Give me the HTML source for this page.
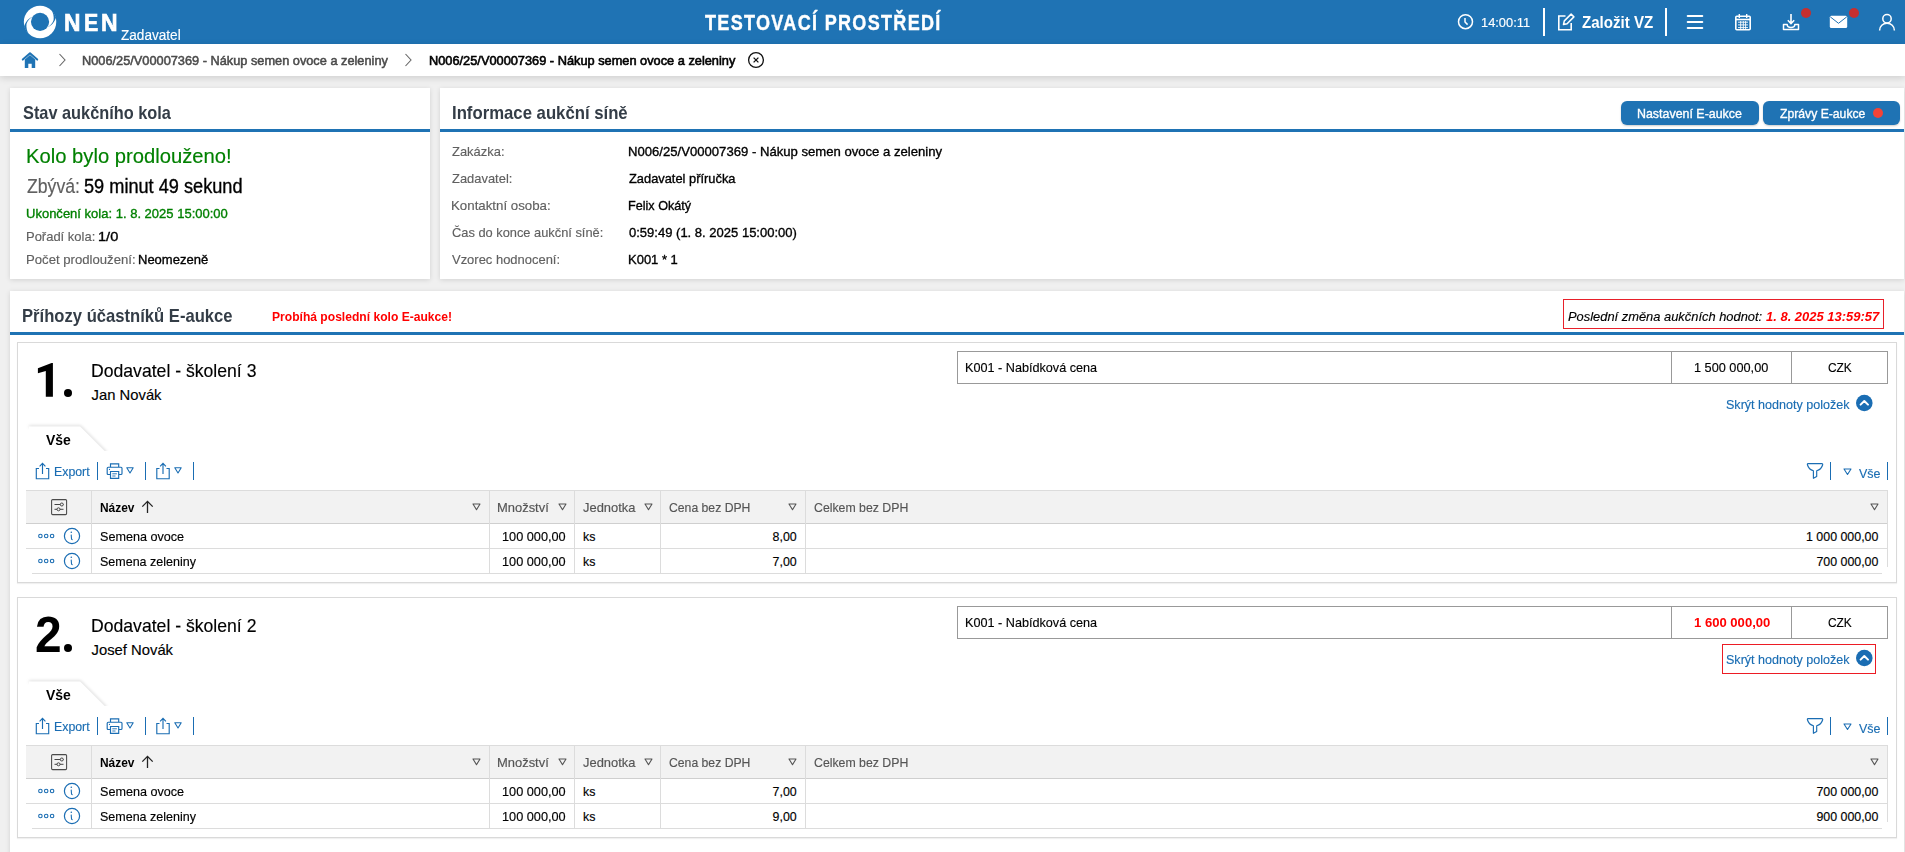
<!DOCTYPE html>
<html lang="cs">
<head>
<meta charset="utf-8">
<title>NEN - Aukční síň</title>
<style>
*{box-sizing:border-box;margin:0;padding:0}
html,body{width:1905px;height:852px;overflow:hidden}
body{background:#f0f0f0;font-family:"Liberation Sans",sans-serif;color:#000;position:relative}
.abs{position:absolute;white-space:nowrap}
.t{position:absolute;white-space:nowrap;line-height:0;transform-origin:0 0}
.panel{background:#fff;box-shadow:0 1px 5px rgba(0,0,0,0.13)}
.btn{background:#1f73b4;border-radius:6px;box-shadow:0 1px 2px rgba(0,0,0,0.2)}
.card{background:#fff;border:1px solid #d9d9d9;box-shadow:0 1px 1px rgba(0,0,0,0.06)}
</style>
</head>
<body>
<div class="abs" style="left:0;top:0;width:1905px;height:44px;background:#1f73b4"></div>
<svg class="abs" style="left:0;top:0" width="64" height="44" viewBox="0 0 64 44">
<circle cx="40.05" cy="21.95" r="16.2" fill="#fff"/><circle cx="40.05" cy="21.85" r="9.1" fill="#1f73b4"/>
<path id="gp1" d="M32.9 16.4C28.5 18.3 25.2 22 24.1 26.7A16.3 16.3 0 0 0 29 34.1C26.8 31.5 26.1 27.3 26.5 24C27.4 20.9 29.8 18.2 32.9 16.4Z" fill="#1f73b4"/>
<use href="#gp1" transform="rotate(180 40.05 21.95)"/>
</svg>
<svg class="abs" style="left:1457px;top:13px" width="18" height="18" viewBox="0 0 18 18"><circle cx="8.5" cy="8.7" r="7" stroke="#fff" stroke-width="1.5" fill="none"/><path d="M8 5v4l2.6 2.6" stroke="#fff" stroke-width="1.5" fill="none"/></svg>
<div class="abs" style="left:1543px;top:8px;width:2px;height:28px;background:#fff"></div>
<svg class="abs" style="left:1557px;top:13px" width="18" height="18" viewBox="0 0 18 18"><path d="M8.5 3H1.8v13.8h12.4V10" stroke="#fff" stroke-width="1.6" fill="none"/><path d="M6.5 11.5l.8-3.6 6.8-6.8 2.8 2.8-6.8 6.8z" stroke="#fff" stroke-width="1.5" fill="none" stroke-linejoin="round"/></svg>
<div class="abs" style="left:1665px;top:8px;width:2px;height:28px;background:#fff"></div>
<svg class="abs" style="left:1686px;top:14px" width="18" height="16" viewBox="0 0 18 16"><path d="M1.8 2h14.4M1.8 8h14.4M1.8 14h14.4" stroke="#fff" stroke-width="2.2" stroke-linecap="round"/></svg>
<svg class="abs" style="left:1734px;top:13px" width="18" height="18" viewBox="0 0 18 18"><rect x="1.8" y="3.2" width="14.4" height="13.6" rx="1" stroke="#fff" stroke-width="1.6" fill="none"/><path d="M1.8 6.5h14.4" stroke="#fff" stroke-width="1.6"/><path d="M5.3 1v4M12.7 1v4" stroke="#fff" stroke-width="1.4"/><path d="M4 9.2h10M4 11.9h10M4 14.6h10M6.7 8v8M9.3 8v8M11.6 8v8" stroke="#fff" stroke-width="0.9"/></svg>
<svg class="abs" style="left:1782px;top:13px" width="18" height="18" viewBox="0 0 18 18"><path d="M9 1v9.5M5.8 7.2L9 10.5l3.2-3.3" stroke="#fff" stroke-width="1.6" fill="none"/><path d="M1.5 11.5v5h15v-5h-3.7c0 2-1.5 3-3.8 3s-3.8-1-3.8-3z" stroke="#fff" stroke-width="1.5" fill="none" stroke-linejoin="round"/></svg>
<div class="abs" style="left:1801px;top:8px;width:10px;height:10px;border-radius:50%;background:#c62f2f"></div>
<svg class="abs" style="left:1829px;top:15px" width="19" height="14" viewBox="0 0 19 14"><rect x="0.8" y="0.8" width="17.4" height="12.2" rx="1.5" fill="#fff"/><path d="M1.2 1.8l8.3 6.5 8.3-6.5" stroke="#1f73b4" stroke-width="1" fill="none"/></svg>
<div class="abs" style="left:1849px;top:8px;width:10px;height:10px;border-radius:50%;background:#c62f2f"></div>
<svg class="abs" style="left:1878px;top:13px" width="18" height="18" viewBox="0 0 18 18"><circle cx="9" cy="5.8" r="4.2" stroke="#fff" stroke-width="1.5" fill="none"/><path d="M1.6 17.5c0-4.5 3.3-7.2 7.4-7.2s7.4 2.7 7.4 7.2" stroke="#fff" stroke-width="1.5" fill="none"/></svg>
<div class="abs" style="left:0;top:44px;width:1905px;height:32px;background:#fff;box-shadow:0 2px 7px rgba(0,0,0,0.14)"></div>
<svg class="abs" style="left:21px;top:51px" width="18" height="18" viewBox="0 0 18 18"><path d="M1.8 8.6L9 2.2l7.2 6.4" stroke="#1f73b4" stroke-width="2" fill="none" stroke-linecap="round" stroke-linejoin="round"/><path d="M3.8 8.4L9 3.9l5.2 4.5V17H10.7v-4.3H7.3V17H3.8z" fill="#1f73b4"/></svg>
<svg class="abs" style="left:57px;top:53px" width="12" height="14" viewBox="0 0 12 14"><path d="M2.5 1l5.5 6-5.5 6" stroke="#666" stroke-width="1.1" fill="none"/></svg>
<svg class="abs" style="left:403px;top:53px" width="12" height="14" viewBox="0 0 12 14"><path d="M2.5 1l5.5 6-5.5 6" stroke="#666" stroke-width="1.1" fill="none"/></svg>
<svg class="abs" style="left:747px;top:51px" width="18" height="18" viewBox="0 0 18 18"><circle cx="9" cy="9" r="7.4" stroke="#111" stroke-width="1.3" fill="none"/><path d="M6.6 6.6l4.8 4.8M11.4 6.6l-4.8 4.8" stroke="#111" stroke-width="1.3"/></svg>
<div class="abs panel" style="left:10px;top:88px;width:420px;height:191px"></div>
<div class="abs" style="left:10px;top:129px;width:420px;height:3px;background:#1f73b4"></div>
<div class="abs panel" style="left:440px;top:88px;width:1464px;height:191px"></div>
<div class="abs" style="left:440px;top:129px;width:1464px;height:3px;background:#1f73b4"></div>
<div class="abs btn" style="left:1621px;top:101px;width:138px;height:24px"></div>
<div class="abs btn" style="left:1763px;top:101px;width:137px;height:24px"></div>
<div class="abs" style="left:1873px;top:108px;width:10px;height:10px;border-radius:50%;background:#f44336"></div>
<div class="abs panel" style="left:10px;top:291px;width:1894px;height:600px"></div>
<div class="abs" style="left:1563px;top:299px;width:321px;height:30px;border:1px solid #e8202a"></div>
<div class="abs" style="left:10px;top:332px;width:1894px;height:3px;background:#1f73b4"></div>
<div class="abs card" style="left:17px;top:342px;width:1880px;height:241px"></div>
<svg class="abs" style="left:30px;top:355px" width="30" height="45" viewBox="30 355 30 45"><path d="M37.9 368.2L51.6 362.9H52.9V396.8H45.8V370.9L37.9 373.2Z" fill="#000"/></svg>
<div class="abs" style="left:64px;top:389.3px;width:8.2px;height:8.2px;border-radius:50%;background:#000"></div>
<div class="abs" style="left:957px;top:351px;width:931px;height:33px;border:1px solid #999"></div>
<div class="abs" style="left:1671px;top:351px;width:1px;height:33px;background:#999"></div>
<div class="abs" style="left:1791px;top:351px;width:1px;height:33px;background:#999"></div>
<svg class="abs" style="left:1855px;top:394px" width="18" height="18" viewBox="0 0 18 18"><circle cx="9.3" cy="9" r="8.3" fill="#1a6db3"/><path d="M5.6 10.6L9.3 7l3.7 3.6" stroke="#fff" stroke-width="2" fill="none" stroke-linecap="round" stroke-linejoin="round"/></svg>
<svg class="abs" style="left:20px;top:418px;overflow:hidden" width="100" height="33" viewBox="0 0 100 33"><defs><filter id="tsh0" x="-20%" y="-50%" width="140%" height="200%"><feGaussianBlur stdDeviation="1.6"/></filter></defs><path d="M9 8.5H60l26 26" stroke="#000" stroke-opacity="0.16" stroke-width="2.2" fill="none" filter="url(#tsh0)"/><path d="M9 8.6H60.2l26 26V40H9z" fill="#fff"/></svg>
<svg class="abs" style="left:34px;top:461px" width="17" height="19" viewBox="0 0 17 19"><path d="M5 7.5H2.3v10.2h12.4V7.5H12" stroke="#1a6db3" stroke-width="1.15" fill="none"/><path d="M8.5 13V2.5M5.6 5.3L8.5 2.4l2.9 2.9" stroke="#1a6db3" stroke-width="1.15" fill="none"/></svg>
<div class="abs" style="left:97px;top:462px;width:1px;height:18px;background:#1a6db3"></div>
<div class="abs" style="left:145px;top:462px;width:1px;height:18px;background:#1a6db3"></div>
<div class="abs" style="left:193px;top:462px;width:1px;height:18px;background:#1a6db3"></div>
<svg class="abs" style="left:106px;top:462px" width="18" height="18" viewBox="0 0 18 18"><path d="M4.5 5V1.8h8.2V5" stroke="#1a6db3" stroke-width="1.15" fill="none"/><path d="M4.3 12.5H2.2c-.6 0-1-.4-1-1V6.2c0-.6.4-1 1-1h12.8c.6 0 1 .4 1 1v5.3c0 .6-.4 1-1 1h-2.1" stroke="#1a6db3" stroke-width="1.15" fill="none"/><path d="M4.5 9.5h8.2v6.8H4.5z" stroke="#1a6db3" stroke-width="1.15" fill="none"/><path d="M6.3 11.8h4.6M6.3 14h3.2" stroke="#1a6db3" stroke-width="0.9"/><circle cx="3.5" cy="7.4" r=".6" fill="#1a6db3"/></svg>
<svg class="abs" style="left:126px;top:467px" width="8" height="7" viewBox="0 0 8 7"><path d="M0.8 0.8h6.4L4 6z" stroke="#1a6db3" stroke-width="1.1" fill="none" stroke-linejoin="round"/></svg>
<svg class="abs" style="left:155px;top:461px" width="16" height="19" viewBox="0 0 16 19"><path d="M4.5 7.5H1.8v10.2h12.4V7.5H11.5" stroke="#1a6db3" stroke-width="1.15" fill="none"/><path d="M8 13V2.5M5.1 5.3L8 2.4l2.9 2.9" stroke="#1a6db3" stroke-width="1.15" fill="none"/></svg>
<svg class="abs" style="left:174px;top:467px" width="8" height="7" viewBox="0 0 8 7"><path d="M0.8 0.8h6.4L4 6z" stroke="#1a6db3" stroke-width="1.1" fill="none" stroke-linejoin="round"/></svg>
<svg class="abs" style="left:1805px;top:461px" width="19" height="19" viewBox="0 0 19 19"><path d="M2.9 2.6H16.8C17.6 2.6 17.9 3.2 17.6 4C16.8 6.8 14.6 8.9 11.7 9.7V15.4L8.4 17.3V9.7C5.5 8.9 3.3 6.8 2.5 4C2.2 3.2 2.5 2.6 2.9 2.6Z" stroke="#1a6db3" stroke-width="1.15" fill="none" stroke-linejoin="round"/></svg>
<div class="abs" style="left:1830px;top:462px;width:1px;height:18px;background:#1a6db3"></div>
<svg class="abs" style="left:1842.5px;top:467.5px" width="9" height="8" viewBox="0 0 9 8"><path d="M1 1h7L4.5 6.5z" stroke="#1a6db3" stroke-width="1.1" fill="none" stroke-linejoin="round"/></svg>
<div class="abs" style="left:1886.5px;top:462px;width:1px;height:18px;background:#1a6db3"></div>
<div class="abs" style="left:26px;top:490px;width:1862px;height:34px;background:#f2f2f2;border-top:1px solid #dcdcdc;border-bottom:1px solid #cfcfcf"></div>
<div class="abs" style="left:91px;top:491px;width:1px;height:82px;background:#dcdcdc"></div>
<div class="abs" style="left:489px;top:491px;width:1px;height:82px;background:#dcdcdc"></div>
<div class="abs" style="left:574px;top:491px;width:1px;height:82px;background:#dcdcdc"></div>
<div class="abs" style="left:660px;top:491px;width:1px;height:82px;background:#dcdcdc"></div>
<div class="abs" style="left:805px;top:491px;width:1px;height:82px;background:#dcdcdc"></div>
<div class="abs" style="left:1887px;top:491px;width:1px;height:76px;background:#dcdcdc"></div>
<div class="abs" style="left:26px;top:548px;width:1862px;height:1px;background:#dcdcdc"></div>
<div class="abs" style="left:32px;top:573px;width:1850px;height:1px;background:#dcdcdc"></div>
<svg class="abs" style="left:50px;top:498px" width="18" height="18" viewBox="0 0 18 18"><rect x="1.6" y="1.6" width="15" height="15" rx="1" stroke="#4a4a4a" stroke-width="1.05" fill="none"/><path d="M4.5 6.5h9M4.5 11.3h9" stroke="#444" stroke-width="1"/><circle cx="11.8" cy="6.5" r="1.5" fill="#f2f2f2" stroke="#444" stroke-width="1"/><circle cx="8.5" cy="11.3" r="1.5" fill="#f2f2f2" stroke="#444" stroke-width="1"/></svg>
<svg class="abs" style="left:141px;top:500px" width="13" height="14" viewBox="0 0 13 14"><path d="M6.5 13V1.5M1.3 6.6L6.5 1.4l5.2 5.2" stroke="#222" stroke-width="1.3" fill="none"/></svg>
<svg class="abs" style="left:471.5px;top:503px" width="9" height="8" viewBox="0 0 9 8"><path d="M1 1h7L4.5 6.7z" stroke="#555" stroke-width="1.1" fill="none" stroke-linejoin="round"/></svg>
<svg class="abs" style="left:557.5px;top:503px" width="9" height="8" viewBox="0 0 9 8"><path d="M1 1h7L4.5 6.7z" stroke="#555" stroke-width="1.1" fill="none" stroke-linejoin="round"/></svg>
<svg class="abs" style="left:643.5px;top:503px" width="9" height="8" viewBox="0 0 9 8"><path d="M1 1h7L4.5 6.7z" stroke="#555" stroke-width="1.1" fill="none" stroke-linejoin="round"/></svg>
<svg class="abs" style="left:788px;top:503px" width="9" height="8" viewBox="0 0 9 8"><path d="M1 1h7L4.5 6.7z" stroke="#555" stroke-width="1.1" fill="none" stroke-linejoin="round"/></svg>
<svg class="abs" style="left:1870px;top:503px" width="9" height="8" viewBox="0 0 9 8"><path d="M1 1h7L4.5 6.7z" stroke="#555" stroke-width="1.1" fill="none" stroke-linejoin="round"/></svg>
<svg class="abs" style="left:37px;top:532px" width="18" height="8" viewBox="0 0 18 8"><circle cx="3.4" cy="4" r="1.75" stroke="#1a6db3" stroke-width="1.1" fill="none"/><circle cx="9.2" cy="4" r="1.75" stroke="#1a6db3" stroke-width="1.1" fill="none"/><circle cx="15.1" cy="4" r="1.75" stroke="#1a6db3" stroke-width="1.1" fill="none"/></svg>
<svg class="abs" style="left:63px;top:527px" width="18" height="18" viewBox="0 0 18 18"><circle cx="9" cy="9" r="7.6" stroke="#1a6db3" stroke-width="1.2" fill="none"/><circle cx="8.3" cy="5.3" r=".8" fill="#1a6db3"/><path d="M8.2 7.6c.1 1.4.2 3.4.4 4.5.1.5.6.6 1 .4" stroke="#1a6db3" stroke-width="1.1" fill="none"/></svg>
<svg class="abs" style="left:37px;top:557px" width="18" height="8" viewBox="0 0 18 8"><circle cx="3.4" cy="4" r="1.75" stroke="#1a6db3" stroke-width="1.1" fill="none"/><circle cx="9.2" cy="4" r="1.75" stroke="#1a6db3" stroke-width="1.1" fill="none"/><circle cx="15.1" cy="4" r="1.75" stroke="#1a6db3" stroke-width="1.1" fill="none"/></svg>
<svg class="abs" style="left:63px;top:552px" width="18" height="18" viewBox="0 0 18 18"><circle cx="9" cy="9" r="7.6" stroke="#1a6db3" stroke-width="1.2" fill="none"/><circle cx="8.3" cy="5.3" r=".8" fill="#1a6db3"/><path d="M8.2 7.6c.1 1.4.2 3.4.4 4.5.1.5.6.6 1 .4" stroke="#1a6db3" stroke-width="1.1" fill="none"/></svg>
<div class="abs card" style="left:17px;top:597px;width:1880px;height:241px"></div>
<div class="abs" style="left:64px;top:644.3px;width:8.2px;height:8.2px;border-radius:50%;background:#000"></div>
<div class="abs" style="left:957px;top:606px;width:931px;height:33px;border:1px solid #999"></div>
<div class="abs" style="left:1671px;top:606px;width:1px;height:33px;background:#999"></div>
<div class="abs" style="left:1791px;top:606px;width:1px;height:33px;background:#999"></div>
<svg class="abs" style="left:1855px;top:649px" width="18" height="18" viewBox="0 0 18 18"><circle cx="9.3" cy="9" r="8.3" fill="#1a6db3"/><path d="M5.6 10.6L9.3 7l3.7 3.6" stroke="#fff" stroke-width="2" fill="none" stroke-linecap="round" stroke-linejoin="round"/></svg>
<div class="abs" style="left:1722px;top:644px;width:154px;height:30px;border:1px solid #ec1c24"></div>
<svg class="abs" style="left:20px;top:673px;overflow:hidden" width="100" height="33" viewBox="0 0 100 33"><defs><filter id="tsh255" x="-20%" y="-50%" width="140%" height="200%"><feGaussianBlur stdDeviation="1.6"/></filter></defs><path d="M9 8.5H60l26 26" stroke="#000" stroke-opacity="0.16" stroke-width="2.2" fill="none" filter="url(#tsh255)"/><path d="M9 8.6H60.2l26 26V40H9z" fill="#fff"/></svg>
<svg class="abs" style="left:34px;top:716px" width="17" height="19" viewBox="0 0 17 19"><path d="M5 7.5H2.3v10.2h12.4V7.5H12" stroke="#1a6db3" stroke-width="1.15" fill="none"/><path d="M8.5 13V2.5M5.6 5.3L8.5 2.4l2.9 2.9" stroke="#1a6db3" stroke-width="1.15" fill="none"/></svg>
<div class="abs" style="left:97px;top:717px;width:1px;height:18px;background:#1a6db3"></div>
<div class="abs" style="left:145px;top:717px;width:1px;height:18px;background:#1a6db3"></div>
<div class="abs" style="left:193px;top:717px;width:1px;height:18px;background:#1a6db3"></div>
<svg class="abs" style="left:106px;top:717px" width="18" height="18" viewBox="0 0 18 18"><path d="M4.5 5V1.8h8.2V5" stroke="#1a6db3" stroke-width="1.15" fill="none"/><path d="M4.3 12.5H2.2c-.6 0-1-.4-1-1V6.2c0-.6.4-1 1-1h12.8c.6 0 1 .4 1 1v5.3c0 .6-.4 1-1 1h-2.1" stroke="#1a6db3" stroke-width="1.15" fill="none"/><path d="M4.5 9.5h8.2v6.8H4.5z" stroke="#1a6db3" stroke-width="1.15" fill="none"/><path d="M6.3 11.8h4.6M6.3 14h3.2" stroke="#1a6db3" stroke-width="0.9"/><circle cx="3.5" cy="7.4" r=".6" fill="#1a6db3"/></svg>
<svg class="abs" style="left:126px;top:722px" width="8" height="7" viewBox="0 0 8 7"><path d="M0.8 0.8h6.4L4 6z" stroke="#1a6db3" stroke-width="1.1" fill="none" stroke-linejoin="round"/></svg>
<svg class="abs" style="left:155px;top:716px" width="16" height="19" viewBox="0 0 16 19"><path d="M4.5 7.5H1.8v10.2h12.4V7.5H11.5" stroke="#1a6db3" stroke-width="1.15" fill="none"/><path d="M8 13V2.5M5.1 5.3L8 2.4l2.9 2.9" stroke="#1a6db3" stroke-width="1.15" fill="none"/></svg>
<svg class="abs" style="left:174px;top:722px" width="8" height="7" viewBox="0 0 8 7"><path d="M0.8 0.8h6.4L4 6z" stroke="#1a6db3" stroke-width="1.1" fill="none" stroke-linejoin="round"/></svg>
<svg class="abs" style="left:1805px;top:716px" width="19" height="19" viewBox="0 0 19 19"><path d="M2.9 2.6H16.8C17.6 2.6 17.9 3.2 17.6 4C16.8 6.8 14.6 8.9 11.7 9.7V15.4L8.4 17.3V9.7C5.5 8.9 3.3 6.8 2.5 4C2.2 3.2 2.5 2.6 2.9 2.6Z" stroke="#1a6db3" stroke-width="1.15" fill="none" stroke-linejoin="round"/></svg>
<div class="abs" style="left:1830px;top:717px;width:1px;height:18px;background:#1a6db3"></div>
<svg class="abs" style="left:1842.5px;top:722.5px" width="9" height="8" viewBox="0 0 9 8"><path d="M1 1h7L4.5 6.5z" stroke="#1a6db3" stroke-width="1.1" fill="none" stroke-linejoin="round"/></svg>
<div class="abs" style="left:1886.5px;top:717px;width:1px;height:18px;background:#1a6db3"></div>
<div class="abs" style="left:26px;top:745px;width:1862px;height:34px;background:#f2f2f2;border-top:1px solid #dcdcdc;border-bottom:1px solid #cfcfcf"></div>
<div class="abs" style="left:91px;top:746px;width:1px;height:82px;background:#dcdcdc"></div>
<div class="abs" style="left:489px;top:746px;width:1px;height:82px;background:#dcdcdc"></div>
<div class="abs" style="left:574px;top:746px;width:1px;height:82px;background:#dcdcdc"></div>
<div class="abs" style="left:660px;top:746px;width:1px;height:82px;background:#dcdcdc"></div>
<div class="abs" style="left:805px;top:746px;width:1px;height:82px;background:#dcdcdc"></div>
<div class="abs" style="left:1887px;top:746px;width:1px;height:76px;background:#dcdcdc"></div>
<div class="abs" style="left:26px;top:803px;width:1862px;height:1px;background:#dcdcdc"></div>
<div class="abs" style="left:32px;top:828px;width:1850px;height:1px;background:#dcdcdc"></div>
<svg class="abs" style="left:50px;top:753px" width="18" height="18" viewBox="0 0 18 18"><rect x="1.6" y="1.6" width="15" height="15" rx="1" stroke="#4a4a4a" stroke-width="1.05" fill="none"/><path d="M4.5 6.5h9M4.5 11.3h9" stroke="#444" stroke-width="1"/><circle cx="11.8" cy="6.5" r="1.5" fill="#f2f2f2" stroke="#444" stroke-width="1"/><circle cx="8.5" cy="11.3" r="1.5" fill="#f2f2f2" stroke="#444" stroke-width="1"/></svg>
<svg class="abs" style="left:141px;top:755px" width="13" height="14" viewBox="0 0 13 14"><path d="M6.5 13V1.5M1.3 6.6L6.5 1.4l5.2 5.2" stroke="#222" stroke-width="1.3" fill="none"/></svg>
<svg class="abs" style="left:471.5px;top:758px" width="9" height="8" viewBox="0 0 9 8"><path d="M1 1h7L4.5 6.7z" stroke="#555" stroke-width="1.1" fill="none" stroke-linejoin="round"/></svg>
<svg class="abs" style="left:557.5px;top:758px" width="9" height="8" viewBox="0 0 9 8"><path d="M1 1h7L4.5 6.7z" stroke="#555" stroke-width="1.1" fill="none" stroke-linejoin="round"/></svg>
<svg class="abs" style="left:643.5px;top:758px" width="9" height="8" viewBox="0 0 9 8"><path d="M1 1h7L4.5 6.7z" stroke="#555" stroke-width="1.1" fill="none" stroke-linejoin="round"/></svg>
<svg class="abs" style="left:788px;top:758px" width="9" height="8" viewBox="0 0 9 8"><path d="M1 1h7L4.5 6.7z" stroke="#555" stroke-width="1.1" fill="none" stroke-linejoin="round"/></svg>
<svg class="abs" style="left:1870px;top:758px" width="9" height="8" viewBox="0 0 9 8"><path d="M1 1h7L4.5 6.7z" stroke="#555" stroke-width="1.1" fill="none" stroke-linejoin="round"/></svg>
<svg class="abs" style="left:37px;top:787px" width="18" height="8" viewBox="0 0 18 8"><circle cx="3.4" cy="4" r="1.75" stroke="#1a6db3" stroke-width="1.1" fill="none"/><circle cx="9.2" cy="4" r="1.75" stroke="#1a6db3" stroke-width="1.1" fill="none"/><circle cx="15.1" cy="4" r="1.75" stroke="#1a6db3" stroke-width="1.1" fill="none"/></svg>
<svg class="abs" style="left:63px;top:782px" width="18" height="18" viewBox="0 0 18 18"><circle cx="9" cy="9" r="7.6" stroke="#1a6db3" stroke-width="1.2" fill="none"/><circle cx="8.3" cy="5.3" r=".8" fill="#1a6db3"/><path d="M8.2 7.6c.1 1.4.2 3.4.4 4.5.1.5.6.6 1 .4" stroke="#1a6db3" stroke-width="1.1" fill="none"/></svg>
<svg class="abs" style="left:37px;top:812px" width="18" height="8" viewBox="0 0 18 8"><circle cx="3.4" cy="4" r="1.75" stroke="#1a6db3" stroke-width="1.1" fill="none"/><circle cx="9.2" cy="4" r="1.75" stroke="#1a6db3" stroke-width="1.1" fill="none"/><circle cx="15.1" cy="4" r="1.75" stroke="#1a6db3" stroke-width="1.1" fill="none"/></svg>
<svg class="abs" style="left:63px;top:807px" width="18" height="18" viewBox="0 0 18 18"><circle cx="9" cy="9" r="7.6" stroke="#1a6db3" stroke-width="1.2" fill="none"/><circle cx="8.3" cy="5.3" r=".8" fill="#1a6db3"/><path d="M8.2 7.6c.1 1.4.2 3.4.4 4.5.1.5.6.6 1 .4" stroke="#1a6db3" stroke-width="1.1" fill="none"/></svg>
<div class="t" style="left:63.98px;top:23px;font-size:24.8px;color:#fff;font-weight:bold;transform:scaleX(0.9187);-webkit-text-stroke:0.7px #fff">N</div>
<div class="t" style="left:84.24px;top:23px;font-size:24.8px;color:#fff;font-weight:bold;transform:scaleX(0.8600);-webkit-text-stroke:0.7px #fff">E</div>
<div class="t" style="left:101.08px;top:23px;font-size:24.8px;color:#fff;font-weight:bold;transform:scaleX(0.9250);-webkit-text-stroke:0.7px #fff">N</div>
<div class="t" style="left:120.70px;top:35px;font-size:15.4px;color:#fff;transform:scaleX(0.8828);-webkit-text-stroke:0.15px #fff">Zadavatel</div>
<div class="t" style="left:704.50px;top:23px;font-size:22.3px;color:#fff;font-weight:bold;letter-spacing:1.600px;transform:scaleX(0.8098);-webkit-text-stroke:0.4px #fff">TESTOVACÍ PROSTŘEDÍ</div>
<div class="t" style="left:1480.83px;top:23px;font-size:13.3px;color:#fff;-webkit-text-stroke:0.15px #fff;transform:scaleX(0.9660)">14:00:11</div>
<div class="t" style="left:1581.50px;top:23px;font-size:16px;color:#fff;font-weight:bold;transform:scaleX(0.9435)">Založit VZ</div>
<div class="t" style="left:82.09px;top:61px;font-size:12.6px;color:#4a4a4a;transform:scaleX(1.0137);-webkit-text-stroke:0.5px #4a4a4a">N006/25/V00007369 - Nákup semen ovoce a zeleniny</div>
<div class="t" style="left:428.98px;top:61px;font-size:12.6px;color:#000;transform:scaleX(1.0151);-webkit-text-stroke:0.6px #000">N006/25/V00007369 - Nákup semen ovoce a zeleniny</div>
<div class="t" style="left:22.50px;top:113px;font-size:18.5px;color:#343d47;font-weight:bold;transform:scaleX(0.8824)">Stav aukčního kola</div>
<div class="t" style="left:25.50px;top:156px;font-size:20.3px;color:#008000;-webkit-text-stroke:0.15px #008000;transform:scaleX(0.9970)">Kolo bylo prodlouženo!</div>
<div class="t" style="left:26.50px;top:186px;font-size:19.6px;color:#606060;-webkit-text-stroke:0.15px #606060;transform:scaleX(0.9014)">Zbývá:</div>
<div class="t" style="left:83.80px;top:186px;font-size:19.6px;color:#000;-webkit-text-stroke:0.35px #000;transform:scaleX(0.9270)">59 minut 49 sekund</div>
<div class="t" style="left:25.51px;top:214px;font-size:13.2px;color:#008000;-webkit-text-stroke:0.35px #008000;transform:scaleX(0.9866)">Ukončení kola: 1. 8. 2025 15:00:00</div>
<div class="t" style="left:25.52px;top:237px;font-size:13.2px;color:#606060;-webkit-text-stroke:0.15px #606060;transform:scaleX(0.9838)">Pořadí kola:</div>
<div class="t" style="left:98.49px;top:237px;font-size:13.2px;color:#000;-webkit-text-stroke:0.35px #000;transform:scaleX(1.1060)">1/0</div>
<div class="t" style="left:25.50px;top:260px;font-size:13.2px;color:#606060;-webkit-text-stroke:0.15px #606060;transform:scaleX(0.9963)">Počet prodloužení:</div>
<div class="t" style="left:138.21px;top:260px;font-size:13.2px;color:#000;-webkit-text-stroke:0.35px #000;transform:scaleX(0.9860)">Neomezeně</div>
<div class="t" style="left:451.60px;top:113px;font-size:18.5px;color:#343d47;font-weight:bold;transform:scaleX(0.9040)">Informace aukční síně</div>
<div class="t" style="left:1637.47px;top:114px;font-size:13.3px;color:#fff;-webkit-text-stroke:0.35px #fff;transform:scaleX(0.9338)">Nastavení E-aukce</div>
<div class="t" style="left:1779.80px;top:114px;font-size:13.3px;color:#fff;-webkit-text-stroke:0.35px #fff;transform:scaleX(0.9168)">Zprávy E-aukce</div>
<div class="t" style="left:452.30px;top:152px;font-size:13.2px;color:#606060;-webkit-text-stroke:0.15px #606060;transform:scaleX(0.9822)">Zakázka:</div>
<div class="t" style="left:627.51px;top:152px;font-size:13.2px;color:#000;-webkit-text-stroke:0.35px #000;transform:scaleX(0.9940)">N006/25/V00007369 - Nákup semen ovoce a zeleniny</div>
<div class="t" style="left:452.30px;top:179px;font-size:13.2px;color:#606060;-webkit-text-stroke:0.15px #606060;transform:scaleX(0.9801)">Zadavatel:</div>
<div class="t" style="left:628.50px;top:179px;font-size:13.2px;color:#000;-webkit-text-stroke:0.35px #000;transform:scaleX(0.9747)">Zadavatel příručka</div>
<div class="t" style="left:451.29px;top:206px;font-size:13.2px;color:#606060;-webkit-text-stroke:0.15px #606060;transform:scaleX(1.0071)">Kontaktní osoba:</div>
<div class="t" style="left:627.54px;top:206px;font-size:13.2px;color:#000;-webkit-text-stroke:0.35px #000;transform:scaleX(0.9563)">Felix Okátý</div>
<div class="t" style="left:452.30px;top:233px;font-size:13.2px;color:#606060;-webkit-text-stroke:0.15px #606060;transform:scaleX(0.9732)">Čas do konce aukční síně:</div>
<div class="t" style="left:628.50px;top:233px;font-size:13.2px;color:#000;-webkit-text-stroke:0.35px #000;transform:scaleX(0.9870)">0:59:49 (1. 8. 2025 15:00:00)</div>
<div class="t" style="left:452.30px;top:260px;font-size:13.2px;color:#606060;-webkit-text-stroke:0.15px #606060;transform:scaleX(0.9826)">Vzorec hodnocení:</div>
<div class="t" style="left:627.52px;top:260px;font-size:13.2px;color:#000;-webkit-text-stroke:0.35px #000;transform:scaleX(0.9846)">K001 * 1</div>
<div class="t" style="left:21.70px;top:316px;font-size:18.5px;color:#343d47;font-weight:bold;transform:scaleX(0.8982)">Příhozy účastníků E-aukce</div>
<div class="t" style="left:272.30px;top:317px;font-size:13.2px;color:#ff0000;font-weight:bold;transform:scaleX(0.9169)">Probíhá poslední kolo E-aukce!</div>
<div class="t" style="left:1567.50px;top:317px;font-size:13.2px;color:#000;-webkit-text-stroke:0.15px #000;font-style:italic;transform:scaleX(0.9773)">Poslední změna aukčních hodnot:</div>
<div class="t" style="left:1766.30px;top:317px;font-size:13.2px;color:#ff0000;font-weight:bold;font-style:italic;transform:scaleX(0.9838)">1. 8. 2025 13:59:57</div>
<div class="t" style="left:91.35px;top:371px;font-size:18.5px;color:#000;-webkit-text-stroke:0.15px #000;transform:scaleX(0.9519)">Dodavatel - školení 3</div>
<div class="t" style="left:91.60px;top:395px;font-size:14.8px;color:#000;-webkit-text-stroke:0.15px #000">Jan Novák</div>
<div class="t" style="left:965.44px;top:368px;font-size:13.2px;color:#000;-webkit-text-stroke:0.15px #000;transform:scaleX(0.9586)">K001 - Nabídková cena</div>
<div class="t" style="left:1694.04px;top:368px;font-size:13.2px;color:#000;-webkit-text-stroke:0.15px #000;transform:scaleX(0.9648)">1 500 000,00</div>
<div class="t" style="left:1827.50px;top:368px;font-size:13.2px;color:#000;-webkit-text-stroke:0.15px #000;transform:scaleX(0.9030)">CZK</div>
<div class="t" style="left:1726.10px;top:405px;font-size:13.2px;color:#1a6db3;-webkit-text-stroke:0.15px #1a6db3;transform:scaleX(0.9519)">Skrýt hodnoty položek</div>
<div class="t" style="left:46.20px;top:440px;font-size:15.5px;color:#000;font-weight:bold;transform:scaleX(0.9013)">Vše</div>
<div class="t" style="left:53.60px;top:472px;font-size:12.4px;color:#1a6db3;-webkit-text-stroke:0.15px #1a6db3;transform:scaleX(0.9952)">Export</div>
<div class="t" style="left:1858.80px;top:474px;font-size:13.6px;color:#1a6db3;-webkit-text-stroke:0.15px #1a6db3;transform:scaleX(0.9185)">Vše</div>
<div class="t" style="left:100.30px;top:508px;font-size:12.4px;color:#000;font-weight:bold;transform:scaleX(0.9631)">Název</div>
<div class="t" style="left:496.96px;top:508px;font-size:12.4px;color:#555;-webkit-text-stroke:0.15px #555;transform:scaleX(1.0441)">Množství</div>
<div class="t" style="left:582.90px;top:508px;font-size:12.4px;color:#555;-webkit-text-stroke:0.15px #555;transform:scaleX(1.0417)">Jednotka</div>
<div class="t" style="left:669.00px;top:508px;font-size:12.4px;color:#555;-webkit-text-stroke:0.15px #555;transform:scaleX(0.9854)">Cena bez DPH</div>
<div class="t" style="left:814.40px;top:508px;font-size:12.4px;color:#555;-webkit-text-stroke:0.15px #555;transform:scaleX(0.9928)">Celkem bez DPH</div>
<div class="t" style="left:100.30px;top:537px;font-size:12.4px;color:#000;-webkit-text-stroke:0.15px #000;transform:scaleX(1.0173)">Semena ovoce</div>
<div class="t" style="left:502.00px;top:537px;font-size:12.4px;color:#000;-webkit-text-stroke:0.15px #000;transform:scaleX(1.0270)">100 000,00</div>
<div class="t" style="left:583.00px;top:537px;font-size:12.4px;color:#000;-webkit-text-stroke:0.15px #000">ks</div>
<div class="t" style="left:772.58px;top:537px;font-size:12.4px;color:#000;-webkit-text-stroke:0.15px #000">8,00</div>
<div class="t" style="left:1806.04px;top:537px;font-size:12.4px;color:#000;-webkit-text-stroke:0.15px #000">1 000 000,00</div>
<div class="t" style="left:100.30px;top:562px;font-size:12.4px;color:#000;-webkit-text-stroke:0.15px #000;transform:scaleX(1.0088)">Semena zeleniny</div>
<div class="t" style="left:502.00px;top:562px;font-size:12.4px;color:#000;-webkit-text-stroke:0.15px #000;transform:scaleX(1.0270)">100 000,00</div>
<div class="t" style="left:583.00px;top:562px;font-size:12.4px;color:#000;-webkit-text-stroke:0.15px #000">ks</div>
<div class="t" style="left:772.58px;top:562px;font-size:12.4px;color:#000;-webkit-text-stroke:0.15px #000">7,00</div>
<div class="t" style="left:1816.38px;top:562px;font-size:12.4px;color:#000;-webkit-text-stroke:0.15px #000">700 000,00</div>
<div class="t" style="left:34.63px;top:635px;font-size:49.3px;color:#000;font-weight:bold;transform:scaleX(0.9720)">2</div>
<div class="t" style="left:91.35px;top:626px;font-size:18.5px;color:#000;-webkit-text-stroke:0.15px #000;transform:scaleX(0.9519)">Dodavatel - školení 2</div>
<div class="t" style="left:91.60px;top:650px;font-size:14.8px;color:#000;-webkit-text-stroke:0.15px #000">Josef Novák</div>
<div class="t" style="left:965.44px;top:623px;font-size:13.2px;color:#000;-webkit-text-stroke:0.15px #000;transform:scaleX(0.9586)">K001 - Nabídková cena</div>
<div class="t" style="left:1693.50px;top:623px;font-size:13.2px;color:#ff0000;font-weight:bold;transform:scaleX(0.9913)">1 600 000,00</div>
<div class="t" style="left:1827.50px;top:623px;font-size:13.2px;color:#000;-webkit-text-stroke:0.15px #000;transform:scaleX(0.9030)">CZK</div>
<div class="t" style="left:1726.10px;top:660px;font-size:13.2px;color:#1a6db3;-webkit-text-stroke:0.15px #1a6db3;transform:scaleX(0.9519)">Skrýt hodnoty položek</div>
<div class="t" style="left:46.20px;top:695px;font-size:15.5px;color:#000;font-weight:bold;transform:scaleX(0.9013)">Vše</div>
<div class="t" style="left:53.60px;top:727px;font-size:12.4px;color:#1a6db3;-webkit-text-stroke:0.15px #1a6db3;transform:scaleX(0.9952)">Export</div>
<div class="t" style="left:1858.80px;top:729px;font-size:13.6px;color:#1a6db3;-webkit-text-stroke:0.15px #1a6db3;transform:scaleX(0.9185)">Vše</div>
<div class="t" style="left:100.30px;top:763px;font-size:12.4px;color:#000;font-weight:bold;transform:scaleX(0.9631)">Název</div>
<div class="t" style="left:496.96px;top:763px;font-size:12.4px;color:#555;-webkit-text-stroke:0.15px #555;transform:scaleX(1.0441)">Množství</div>
<div class="t" style="left:582.90px;top:763px;font-size:12.4px;color:#555;-webkit-text-stroke:0.15px #555;transform:scaleX(1.0417)">Jednotka</div>
<div class="t" style="left:669.00px;top:763px;font-size:12.4px;color:#555;-webkit-text-stroke:0.15px #555;transform:scaleX(0.9854)">Cena bez DPH</div>
<div class="t" style="left:814.40px;top:763px;font-size:12.4px;color:#555;-webkit-text-stroke:0.15px #555;transform:scaleX(0.9928)">Celkem bez DPH</div>
<div class="t" style="left:100.30px;top:792px;font-size:12.4px;color:#000;-webkit-text-stroke:0.15px #000;transform:scaleX(1.0173)">Semena ovoce</div>
<div class="t" style="left:502.00px;top:792px;font-size:12.4px;color:#000;-webkit-text-stroke:0.15px #000;transform:scaleX(1.0270)">100 000,00</div>
<div class="t" style="left:583.00px;top:792px;font-size:12.4px;color:#000;-webkit-text-stroke:0.15px #000">ks</div>
<div class="t" style="left:772.58px;top:792px;font-size:12.4px;color:#000;-webkit-text-stroke:0.15px #000">7,00</div>
<div class="t" style="left:1816.38px;top:792px;font-size:12.4px;color:#000;-webkit-text-stroke:0.15px #000">700 000,00</div>
<div class="t" style="left:100.30px;top:817px;font-size:12.4px;color:#000;-webkit-text-stroke:0.15px #000;transform:scaleX(1.0088)">Semena zeleniny</div>
<div class="t" style="left:502.00px;top:817px;font-size:12.4px;color:#000;-webkit-text-stroke:0.15px #000;transform:scaleX(1.0270)">100 000,00</div>
<div class="t" style="left:583.00px;top:817px;font-size:12.4px;color:#000;-webkit-text-stroke:0.15px #000">ks</div>
<div class="t" style="left:772.58px;top:817px;font-size:12.4px;color:#000;-webkit-text-stroke:0.15px #000">9,00</div>
<div class="t" style="left:1816.38px;top:817px;font-size:12.4px;color:#000;-webkit-text-stroke:0.15px #000">900 000,00</div>
</body>
</html>
